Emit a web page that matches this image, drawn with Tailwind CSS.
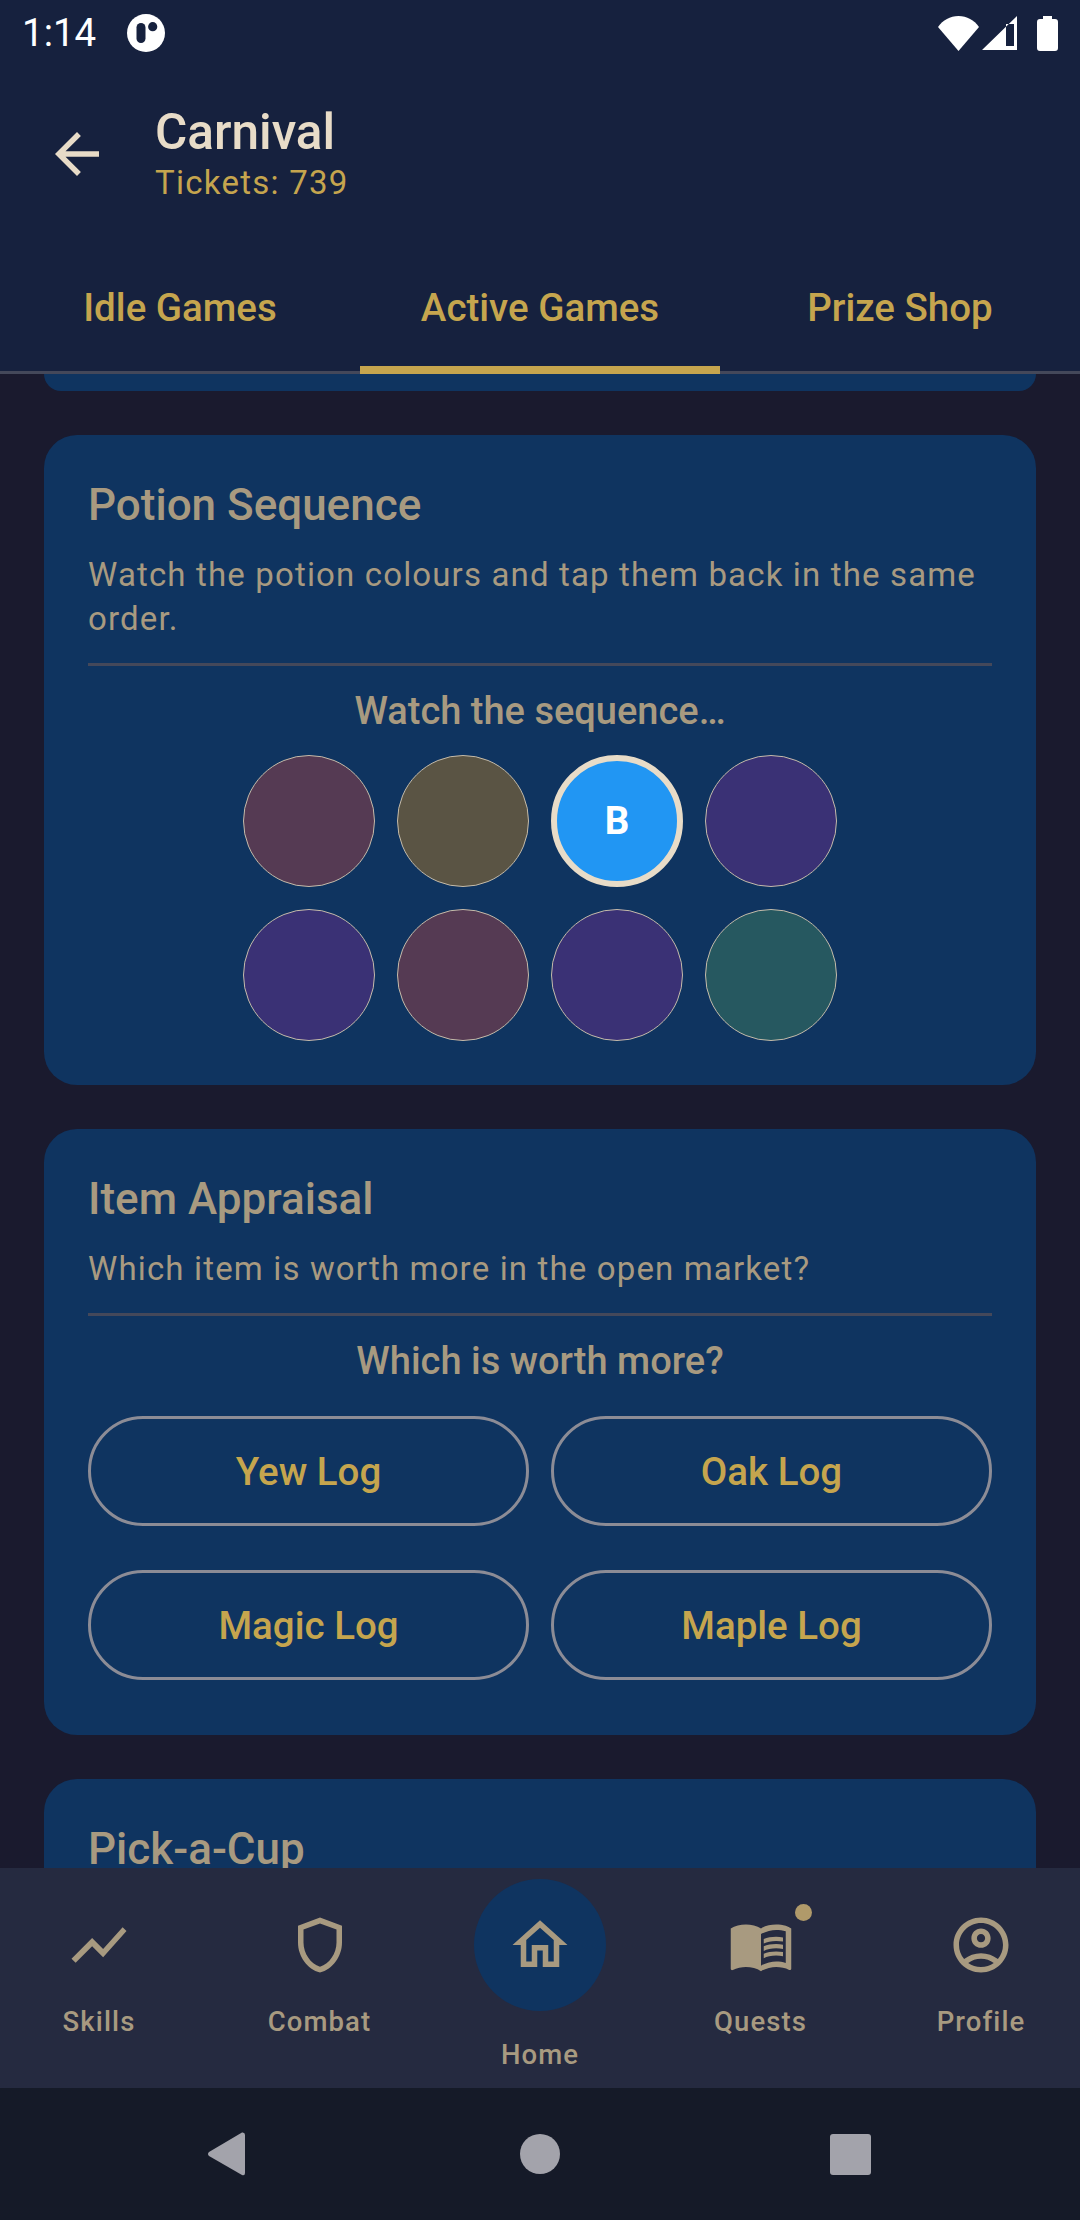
<!DOCTYPE html>
<html lang="en">
<head>
<meta charset="UTF-8">
<title>Carnival</title>
<script src="https://cdn.jsdelivr.net/npm/@tailwindcss/browser@4"></script>
</head>
<body class="w-[1080px] h-[2220px] overflow-hidden flex flex-col bg-[#1a1a2e] font-[family-name:Roboto,sans-serif]">

  <!-- Header -->
  <header class="h-[374px] shrink-0 flex flex-col bg-[#16213e] border-b-[3px] border-[#44485a]">
    <div class="h-[66px] shrink-0 flex items-center justify-between pl-[22px] pr-[22px] text-white">
      <div class="flex items-center gap-[31px]">
        <span class="text-[38.500px] leading-none">1:14</span>
        <svg class="w-[38px] h-[38px]" viewBox="0 0 38 38"><circle cx="19" cy="19" r="19" fill="#fff"/><rect x="9.500" y="9" width="9" height="20" rx="4.500" fill="#16213e"/><circle cx="25.700" cy="12.700" r="4.600" fill="#16213e"/></svg>
      </div>
      <div class="flex items-center">
        <svg class="w-[41px] h-[35px]" viewBox="0 0 41 35"><path d="M0 11C5 4 12 0 20.500 0S36 4 41 11L20.500 35z" fill="#fff"/></svg>
        <svg class="w-[35px] h-[35px] ml-[3px]" viewBox="0 0 35 35"><path fill-rule="evenodd" d="M35 0V34H0zM24 8V30H32V8z" fill="#fff"/></svg>
        <svg class="w-[21px] h-[35px] ml-[20px]" viewBox="0 0 21 35"><path d="M6 0H15V3H18Q21 3 21 6V32Q21 35 18 35H3Q0 35 0 32V6Q0 3 3 3H6z" fill="#fff"/></svg>
      </div>
    </div>
    <div class="flex items-start">
      <svg class="w-[66px] h-[66px] ml-[44px] mt-[55px] fill-[#e8dcc8]" viewBox="0 0 24 24"><path d="M20 11H7.830l5.590-5.590L12 4l-8 8 8 8 1.410-1.410L7.830 13H20v-2z"/></svg>
      <div class="ml-[45px] mt-[38px] flex flex-col">
        <span class="text-[49.500px] leading-[56px] font-medium text-[#e8dcc8]">Carnival</span>
        <span class="text-[33px] leading-[46px] tracking-[1.250px] text-[#c5a54e]">Tickets: 739</span>
      </div>
    </div>
    <nav class="mt-auto h-[129px] pt-[2px] grid grid-cols-3 text-[#c5a54e] text-[38.500px] font-medium">
      <div class="flex items-center justify-center">Idle Games</div>
      <div class="relative flex items-center justify-center">Active Games<span class="absolute left-0 right-0 bottom-[-3px] h-[8px] bg-[#c5a54e]"></span></div>
      <div class="flex items-center justify-center">Prize Shop</div>
    </nav>
  </header>

  <!-- Scrolled games list -->
  <main class="flex-1 min-h-0 overflow-hidden flex flex-col gap-[44px] px-[44px]">
    <div class="h-[17px] shrink-0 rounded-b-[33px] bg-[#0f3460]"></div>

    <section class="shrink-0 rounded-[33px] bg-[#0f3460] p-[44px]">
      <h2 class="text-[44px] leading-[52px] font-medium text-[#a89a80]">Potion Sequence</h2>
      <p class="mt-[22px] text-[33px] leading-[44px] tracking-[1.150px] text-[#a89a80]">Watch the potion colours and tap them back in the same order.</p>
      <div class="mt-[22px] h-[3px] bg-[#44485a]"></div>
      <p class="mt-[23px] text-[38px] leading-[44px] font-medium text-center text-[#a89a80]">Watch the sequence…</p>
      <div class="mt-[22px] grid grid-cols-[repeat(4,132px)] gap-[22px] justify-center">
        <div class="h-[132px] rounded-full border border-[#c4bbaa] bg-[#553a53]"></div>
        <div class="h-[132px] rounded-full border border-[#c4bbaa] bg-[#5a5444]"></div>
        <div class="h-[132px] rounded-full border-[6px] border-[#e8dcc8] bg-[#2196f3] flex items-center justify-center text-white text-[38.500px] font-bold">B</div>
        <div class="h-[132px] rounded-full border border-[#c4bbaa] bg-[#3a3175]"></div>
        <div class="h-[132px] rounded-full border border-[#c4bbaa] bg-[#3a3175]"></div>
        <div class="h-[132px] rounded-full border border-[#c4bbaa] bg-[#553a53]"></div>
        <div class="h-[132px] rounded-full border border-[#c4bbaa] bg-[#3a3175]"></div>
        <div class="h-[132px] rounded-full border border-[#c4bbaa] bg-[#265860]"></div>
      </div>
    </section>

    <section class="shrink-0 rounded-[33px] bg-[#0f3460] px-[44px] pt-[44px] pb-[55px]">
      <h2 class="text-[44px] leading-[52px] font-medium text-[#a89a80]">Item Appraisal</h2>
      <p class="mt-[22px] text-[33px] leading-[44px] tracking-[1.150px] text-[#a89a80]">Which item is worth more in the open market?</p>
      <div class="mt-[22px] h-[3px] bg-[#44485a]"></div>
      <p class="mt-[23px] text-[38px] leading-[44px] font-medium text-center text-[#a89a80]">Which is worth more?</p>
      <div class="mt-[33px] grid grid-cols-2 gap-x-[22px] gap-y-[44px] text-[38.500px] font-medium text-[#c5a54e]">
        <div class="h-[110px] pt-[2px] rounded-full border-[3px] border-[#8c8c96] flex items-center justify-center">Yew Log</div>
        <div class="h-[110px] pt-[2px] rounded-full border-[3px] border-[#8c8c96] flex items-center justify-center">Oak Log</div>
        <div class="h-[110px] pt-[2px] rounded-full border-[3px] border-[#8c8c96] flex items-center justify-center">Magic Log</div>
        <div class="h-[110px] pt-[2px] rounded-full border-[3px] border-[#8c8c96] flex items-center justify-center">Maple Log</div>
      </div>
    </section>

    <section class="shrink-0 rounded-[33px] bg-[#0f3460] p-[44px]">
      <h2 class="text-[44px] leading-[52px] font-medium text-[#a89a80]">Pick-a-Cup</h2>
    </section>
  </main>

  <!-- Bottom navigation -->
  <nav class="h-[220px] shrink-0 grid grid-cols-[repeat(5,220.500px)] justify-center bg-[#252a40] text-[#a89a80] text-[27.500px] tracking-[1.100px] font-medium">
    <div class="flex flex-col items-center pt-[44px]">
      <svg class="w-[66px] h-[66px] fill-[#a89a80]" viewBox="0 0 24 24"><path d="M3.500 18.490l6-6.010 4 4L22 6.920l-1.410-1.410-7.090 7.970-4-4L2 16.990z"/></svg>
      <span class="mt-[26px] leading-[36px]">Skills</span>
    </div>
    <div class="flex flex-col items-center pt-[44px]">
      <svg class="w-[66px] h-[66px] fill-[#a89a80]" viewBox="0 0 24 24"><path d="M12 2 4 5v6.090c0 5.050 3.410 9.760 8 10.910 4.590-1.150 8-5.860 8-10.910V5l-8-3zm6 9.090c0 4-2.550 7.700-6 8.830-3.450-1.130-6-4.820-6-8.830v-4.700l6-2.250 6 2.250v4.700z"/></svg>
      <span class="mt-[26px] leading-[36px]">Combat</span>
    </div>
    <div class="flex flex-col items-center pt-[11px]">
      <div class="w-[132px] h-[132px] rounded-full bg-[#0f3460] flex items-center justify-center">
        <svg class="w-[66px] h-[66px] fill-[#a89a80]" viewBox="0 0 24 24"><path d="M12 5.690l5 4.500V18h-2v-6H9v6H7v-7.810l5-4.500M12 3L2 12h3v8h6v-6h2v6h6v-8h3L12 3z"/></svg>
      </div>
      <span class="mt-[26px] leading-[36px]">Home</span>
    </div>
    <div class="flex flex-col items-center pt-[44px]">
      <div class="relative w-[66px] h-[66px]">
        <svg class="w-[66px] h-[66px] fill-[#a89a80]" viewBox="0 0 24 24"><path d="M21 5c-1.110-.35-2.330-.5-3.500-.5-1.950 0-4.050.4-5.500 1.500-1.450-1.100-3.550-1.500-5.500-1.500S2.450 4.900 1 6v14.650c0 .25.25.5.5.5.1 0 .15-.05.25-.05C3.100 20.450 5.050 20 6.500 20c1.950 0 4.050.4 5.500 1.500 1.350-.85 3.800-1.500 5.500-1.500 1.650 0 3.350.3 4.750 1.050.1.05.15.05.25.05.25 0 .5-.25.5-.5V6c-.6-.45-1.250-.75-2-1zm0 13.500c-1.100-.35-2.300-.5-3.500-.5-1.700 0-4.150.65-5.500 1.500V8c1.350-.85 3.800-1.500 5.500-1.500 1.200 0 2.400.15 3.500.5v11.500z"/><path d="M17.500 10.500c.88 0 1.730.09 2.500.26V9.240c-.79-.15-1.640-.24-2.500-.24-1.700 0-3.240.29-4.500.83v1.660c1.130-.64 2.700-.99 4.500-.99zM13 12.490v1.660c1.130-.64 2.700-.99 4.500-.99.88 0 1.730.09 2.500.26V11.900c-.79-.15-1.640-.24-2.500-.24-1.700 0-3.240.3-4.500.83zm4.500 1.840c-1.700 0-3.240.29-4.500.83v1.660c1.130-.64 2.700-.99 4.500-.99.88 0 1.730.09 2.500.26v-1.520c-.79-.16-1.640-.24-2.500-.24z"/></svg>
        <span class="absolute left-[67px] top-[-8px] w-[17px] h-[17px] rounded-full bg-[#b09a6a]"></span>
      </div>
      <span class="mt-[26px] leading-[36px]">Quests</span>
    </div>
    <div class="flex flex-col items-center pt-[44px]">
      <svg class="w-[66px] h-[66px] fill-[#a89a80]" viewBox="0 0 24 24"><path d="M12 2C6.480 2 2 6.480 2 12s4.480 10 10 10 10-4.480 10-10S17.520 2 12 2zM7.350 18.500C8.660 17.560 10.260 17 12 17s3.340.56 4.650 1.500c-1.310.94-2.910 1.500-4.650 1.500s-3.340-.56-4.650-1.500zm10.790-1.380C16.450 15.800 14.320 15 12 15s-4.450.8-6.140 2.120C4.700 15.730 4 13.950 4 12c0-4.420 3.580-8 8-8s8 3.580 8 8c0 1.950-.7 3.730-1.860 5.120z"/><path d="M12 6c-1.930 0-3.500 1.570-3.500 3.500S10.070 13 12 13s3.500-1.570 3.500-3.500S13.930 6 12 6zm0 5c-.83 0-1.500-.67-1.500-1.500S11.170 8 12 8s1.500.67 1.500 1.500S12.830 11 12 11z"/></svg>
      <span class="mt-[26px] leading-[36px]">Profile</span>
    </div>
  </nav>

  <!-- System navigation -->
  <div class="h-[132px] shrink-0 bg-[#151a28] flex items-center pl-[207px]">
    <svg class="w-[38px] h-[44px]" viewBox="0 0 38 44"><path d="M35 0.500Q38 0 38 3V41Q38 44 35 43L2 24Q0 22 2 20z" fill="#a3a3ab"/></svg>
    <div class="w-[40px] h-[40px] ml-[275px] rounded-full bg-[#a3a3ab]"></div>
    <div class="w-[41px] h-[41px] ml-[270px] rounded-[3px] bg-[#a3a3ab]"></div>
  </div>
</body>
</html>
